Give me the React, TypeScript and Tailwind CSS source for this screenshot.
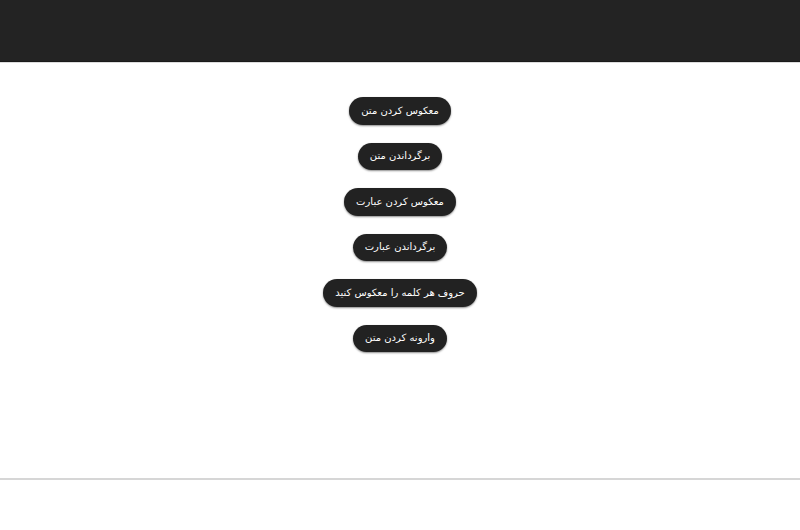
const items = [
  'معکوس کردن متن',
  'برگرداندن متن',
  'معکوس کردن عبارت',
  'برگرداندن عبارت',
  'حروف هر کلمه را معکوس کنید',
  'وارونه کردن متن',
];

export default function App() {
  return (
    <div className="w-[800px] h-[530px] bg-white font-['DejaVu_Sans',sans-serif]">
      <header className="h-[62px] bg-[#232323] border-b border-[#1a1a1a]" />
      <div className="h-px bg-[#dcdcdc]" />
      <main dir="rtl" className="flex h-[415px] flex-col items-center gap-[18px] pt-[34px]">
        {items.map((label) => (
          <button
            key={label}
            className="h-[27.5px] rounded-full bg-[#222222] px-[12px] text-[10px] leading-none text-white shadow-[0_1px_2px_rgba(0,0,0,0.45)]"
          >
            {label}
          </button>
        ))}
      </main>
      <div className="h-0.5 bg-[#d6d6d6]" />
    </div>
  );
}
